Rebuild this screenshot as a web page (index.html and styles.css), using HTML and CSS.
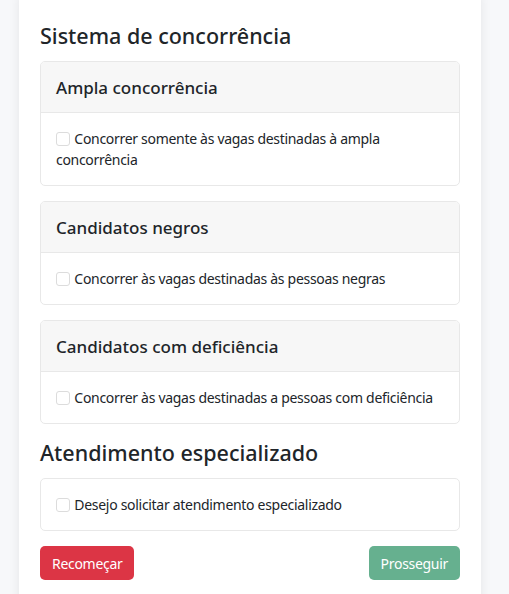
FILE: index.html
```html
<!DOCTYPE html>
<html lang="pt-BR">
<head>
    <meta charset="UTF-8">
    <meta name="viewport" content="width=device-width, initial-scale=1.0">
    <title>Sistema de concorrência</title>
    <link rel="stylesheet" href="styles.css">
</head>
<body>
    <div class="container">
        <h4>Sistema de concorrência</h4>

        <div class="card">
            <div class="card-header">Ampla concorrência</div>
            <div class="card-body">
                <label><input type="checkbox"> Concorrer somente às vagas destinadas à ampla concorrência</label>
            </div>
        </div>

        <div class="card">
            <div class="card-header">Candidatos negros</div>
            <div class="card-body">
                <label><input type="checkbox"> Concorrer às vagas destinadas às pessoas negras</label>
            </div>
        </div>

        <div class="card">
            <div class="card-header">Candidatos com deficiência</div>
            <div class="card-body">
                <label><input type="checkbox"> Concorrer às vagas destinadas a pessoas com deficiência</label>
            </div>
        </div>

        <h4>Atendimento especializado</h4>

        <div class="card">
            <div class="card-body">
                <label><input type="checkbox"> Desejo solicitar atendimento especializado</label>
            </div>
        </div>

        <div class="actions">
            <button class="btn btn-danger">Recomeçar</button>
            <button class="btn btn-success" disabled>Prosseguir</button>
        </div>
    </div>
</body>
</html>
```

FILE: styles.css
```css
* {margin: 0; padding: 0; box-sizing: border-box;}
body {
    font-family: "Noto Sans", "Open Sans", sans-serif;
    font-size: 14px;
    line-height: 21px;
    letter-spacing: -0.3px;
    color: #212529;
    background: #f7f8fa;
    overflow: hidden;
}
.container {
    background: #fff;
    width: 462px;
    margin: -6px 0 0 19px;
    padding: 28px 21px 40px;
    border-radius: 6px;
    box-shadow: 0 0 12px rgba(0,0,0,0.08);
    min-height: 640px;
}
h4 {
    font-size: 21.5px;
    font-weight: 500;
    line-height: 27px;
    letter-spacing: 0;
    margin-bottom: 12px;
}
.card {
    border: 1px solid #e8e8e8;
    border-radius: 5px;
    margin-bottom: 15px;
    overflow: hidden;
}
.card-header {
    background: #f7f7f7;
    border-bottom: 1px solid #e8e8e8;
    padding: 13px 15px 12px;
    font-size: 17px;
    font-weight: 500;
    line-height: 25px;
    letter-spacing: 0;
}
.card-body {padding: 15px 15px;}
label {display: block;}
input[type="checkbox"] {
    appearance: none;
    width: 14px;
    height: 14px;
    border: 1px solid #dcdcdc;
    border-radius: 3px;
    vertical-align: -2px;
    background: #fff;
    margin-right: 1px;
}
.actions {
    display: flex;
    justify-content: space-between;
}
.btn {
    font-family: inherit;
    font-size: 14px;
    letter-spacing: -0.3px;
    color: #fff;
    border: none;
    border-radius: 5px;
    height: 34px;
    padding: 0 12px;
    cursor: pointer;
}
.btn-danger {background: #dc3545;}
.btn-success {background: #66b08f;}
```
